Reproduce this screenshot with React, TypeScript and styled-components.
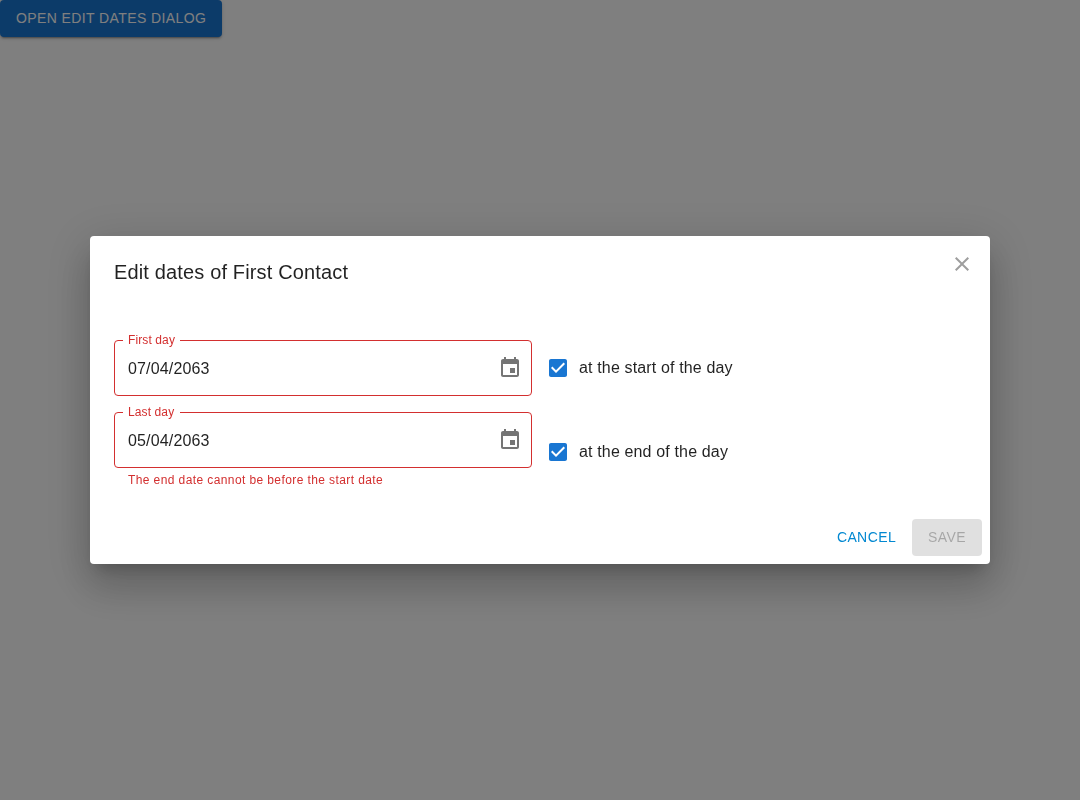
import React from "react";
import styled, { createGlobalStyle, css } from "styled-components";

const GlobalStyle = createGlobalStyle`
  *, *::before, *::after { box-sizing: border-box; }
  body {
    margin: 0;
    background: #fff;
    color: rgba(0, 0, 0, 0.87);
    font-family: "Liberation Sans", Arial, sans-serif;
    font-size: 16px;
    line-height: 1.5;
    letter-spacing: 0.00938em;
    -webkit-font-smoothing: antialiased;
  }
`;

type Variant = "contained" | "text";

const Page = styled.main`
  min-height: 100vh;
`;

const Button = styled.button<{ $variant: Variant }>`
  display: inline-flex;
  align-items: center;
  justify-content: center;
  min-width: 64px;
  margin: 0;
  border: 0;
  border-radius: 4px;
  font-family: inherit;
  font-size: 14px;
  font-weight: 500;
  line-height: 1.75;
  letter-spacing: 0.02857em;
  text-transform: uppercase;
  cursor: pointer;
  ${({ $variant }) =>
    $variant === "contained"
      ? css`
          padding: 6px 16px;
          color: #fff;
          background: #1976d2;
          box-shadow: 0 3px 1px -2px rgba(0, 0, 0, 0.2),
            0 2px 2px 0 rgba(0, 0, 0, 0.14), 0 1px 5px 0 rgba(0, 0, 0, 0.12);
        `
      : css`
          padding: 6px 8px;
          color: #0288d1;
          background: transparent;
        `}
  &:disabled {
    color: rgba(0, 0, 0, 0.26);
    background: rgba(0, 0, 0, 0.12);
    box-shadow: none;
    cursor: default;
  }
`;

const Backdrop = styled.div`
  position: fixed;
  inset: 0;
  display: flex;
  align-items: center;
  justify-content: center;
  background: rgba(0, 0, 0, 0.5);
`;

const Paper = styled.div`
  position: relative;
  display: flex;
  flex-direction: column;
  width: 900px;
  border-radius: 4px;
  background: #fff;
  box-shadow: 0 11px 15px -7px rgba(0, 0, 0, 0.2),
    0 24px 38px 3px rgba(0, 0, 0, 0.14), 0 9px 46px 8px rgba(0, 0, 0, 0.12);
`;

const Title = styled.h2`
  margin: 0;
  padding: 20px 24px;
  font-size: 20px;
  font-weight: 500;
  line-height: 1.6;
  letter-spacing: 0.0075em;
`;

const IconButton = styled.button`
  display: inline-flex;
  padding: 8px;
  border: 0;
  border-radius: 50%;
  background: transparent;
  color: rgba(0, 0, 0, 0.54);
  cursor: pointer;
`;

const CloseButton = styled(IconButton)`
  position: absolute;
  top: 8px;
  right: 8px;
  color: #9e9e9e;
`;

const Svg = styled.svg`
  display: block;
  width: 24px;
  height: 24px;
  flex-shrink: 0;
  fill: currentColor;
`;

const Content = styled.div`
  display: grid;
  grid-template-columns: 1fr 1fr;
  gap: 16px;
  align-items: center;
  padding: 32px 24px 20px;
`;

const Field = styled.div`
  position: relative;
  display: flex;
  flex-direction: column;
`;

const FieldLabel = styled.label`
  position: absolute;
  top: 0;
  left: 0;
  z-index: 1;
  line-height: 1.4375em;
  color: #d32f2f;
  white-space: nowrap;
  transform-origin: top left;
  transform: translate(14px, -9px) scale(0.75);
`;

const InputRow = styled.div`
  position: relative;
  display: flex;
  align-items: center;
  height: 56px;
  padding-right: 14px;

  ${IconButton} {
    margin-left: 8px;
    margin-right: -12px;
  }
`;

const Input = styled.input`
  flex: 1;
  min-width: 0;
  height: 56px;
  padding: 17.5px 0 15.5px 14px;
  border: 0;
  outline: 0;
  background: transparent;
  color: inherit;
  font: inherit;
  line-height: 23px;
  letter-spacing: inherit;
`;

const Outline = styled.fieldset`
  position: absolute;
  inset: -5px 0 0;
  min-width: 0;
  margin: 0;
  padding: 0 8px;
  border: 1px solid #d32f2f;
  border-radius: 4px;
  pointer-events: none;
`;

const Notch = styled.legend`
  height: 11px;
  padding: 0;
  font-size: 12px;
  line-height: 11px;
  visibility: hidden;

  span {
    display: inline-block;
    padding: 0 5px;
  }
`;

const HelperText = styled.p`
  margin: 3px 14px 0;
  color: #d32f2f;
  font-size: 12px;
  line-height: 1.66;
  letter-spacing: 0.03333em;
`;

const CheckLabel = styled.label`
  display: inline-flex;
  align-items: center;
  margin-left: -11px;
  cursor: pointer;
`;

const CheckBox = styled.span`
  display: inline-flex;
  padding: 9px;
  color: #1976d2;
`;

const Actions = styled.div`
  display: flex;
  justify-content: flex-end;
  gap: 8px;
  padding: 8px;
`;

const paths = {
  close:
    "M19 6.41L17.59 5 12 10.59 6.41 5 5 6.41 10.59 12 5 17.59 6.41 19 12 13.41 17.59 19 19 17.59 13.41 12z",
  calendar:
    "M17 12h-5v5h5v-5zM16 1v2H8V1H6v2H5c-1.11 0-1.99.9-1.99 2L3 19c0 1.1.89 2 2 2h14c1.1 0 2-.9 2-2V5c0-1.1-.9-2-2-2h-1V1h-2zm3 18H5V8h14v11z",
  checked:
    "M19 3H5c-1.11 0-2 .9-2 2v14c0 1.1.89 2 2 2h14c1.11 0 2-.9 2-2V5c0-1.1-.89-2-2-2zm-9 14l-5-5 1.41-1.41L10 14.17l7.59-7.59L19 8l-9 9z",
};

function Icon({ name }: { name: keyof typeof paths }) {
  return (
    <Svg viewBox="0 0 24 24" aria-hidden="true">
      <path d={paths[name]} />
    </Svg>
  );
}

interface DateFieldProps {
  id: string;
  label: string;
  value: string;
  error?: string;
}

function DateField({ id, label, value, error }: DateFieldProps) {
  return (
    <Field>
      <FieldLabel htmlFor={id}>{label}</FieldLabel>
      <InputRow>
        <Input id={id} defaultValue={value} />
        <IconButton type="button" aria-label="Choose date">
          <Icon name="calendar" />
        </IconButton>
        <Outline aria-hidden="true">
          <Notch>
            <span>{label}</span>
          </Notch>
        </Outline>
      </InputRow>
      {error && <HelperText>{error}</HelperText>}
    </Field>
  );
}

function CheckOption({ children }: { children: React.ReactNode }) {
  return (
    <CheckLabel>
      <CheckBox role="checkbox" aria-checked="true">
        <Icon name="checked" />
      </CheckBox>
      {children}
    </CheckLabel>
  );
}

export default function App() {
  return (
    <Page>
      <GlobalStyle />
      <Button $variant="contained">Open edit dates dialog</Button>
      <Backdrop>
        <Paper role="dialog" aria-modal="true" aria-labelledby="dialog-title">
          <Title id="dialog-title">Edit dates of First Contact</Title>
          <CloseButton type="button" aria-label="Close">
            <Icon name="close" />
          </CloseButton>
          <Content>
            <DateField id="first-day" label="First day" value="07/04/2063" />
            <CheckOption>at the start of the day</CheckOption>
            <DateField
              id="last-day"
              label="Last day"
              value="05/04/2063"
              error="The end date cannot be before the start date"
            />
            <CheckOption>at the end of the day</CheckOption>
          </Content>
          <Actions>
            <Button $variant="text">Cancel</Button>
            <Button $variant="contained" disabled>
              Save
            </Button>
          </Actions>
        </Paper>
      </Backdrop>
    </Page>
  );
}
